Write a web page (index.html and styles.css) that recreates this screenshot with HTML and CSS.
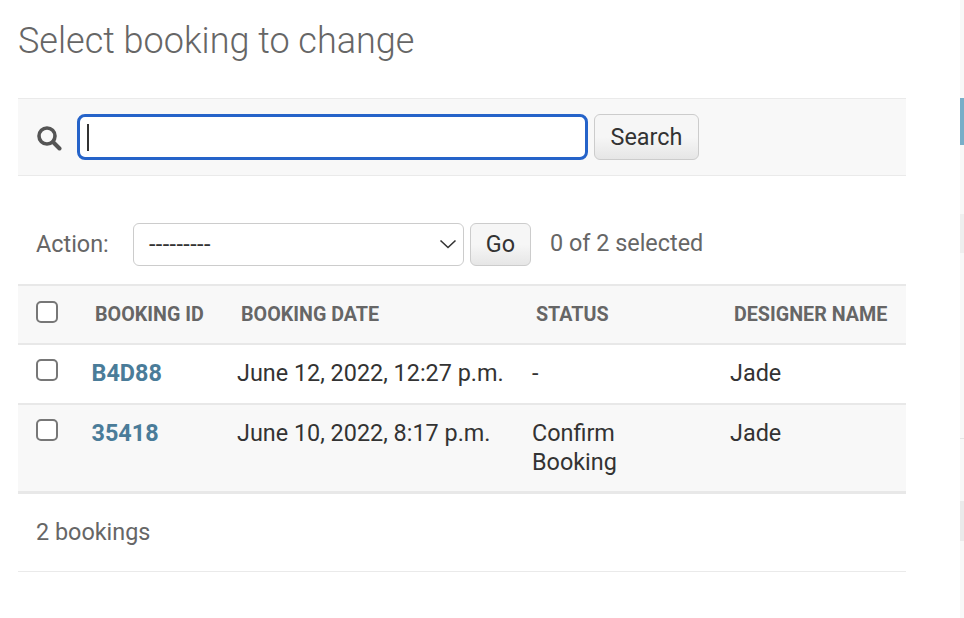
FILE: index.html
```html
<!DOCTYPE html>
<html lang="en">
<head>
<meta charset="utf-8">
<title>Select booking to change</title>
<link rel="stylesheet" href="styles.css">
</head>
<body>
<div class="page">
  <main class="content">
    <h1 class="title">Select booking to change</h1>
    <form class="search-bar">
      <svg class="search-icon" viewBox="0 0 26 26" width="26" height="26" aria-hidden="true"><circle cx="11" cy="11" r="8" fill="none" stroke="#555" stroke-width="3.6"/><path d="M17 17l6.5 6.5" stroke="#555" stroke-width="4" stroke-linecap="round"/></svg>
      <div class="search-input"><span class="caret"></span></div>
      <button type="button" class="btn btn-search">Search</button>
    </form>
    <div class="actions">
      <label class="action-label">Action:</label>
      <div class="select"><span>---------</span>
        <svg viewBox="0 0 18 10" width="18" height="10" aria-hidden="true"><path d="M1.5 1.5L9 8.5l7.5-7" fill="none" stroke="#333" stroke-width="1.6"/></svg>
      </div>
      <button type="button" class="btn btn-go">Go</button>
      <span class="counter">0 of 2 selected</span>
    </div>
    <table class="results">
      <thead>
        <tr>
          <th class="c-check"><span class="check"></span></th>
          <th class="c-id">Booking ID</th>
          <th class="c-date">Booking date</th>
          <th class="c-status">Status</th>
          <th class="c-name">Designer name</th>
        </tr>
      </thead>
      <tbody>
        <tr class="row1">
          <td class="c-check"><span class="check"></span></td>
          <td class="c-id"><a href="#">B4D88</a></td>
          <td class="c-date">June 12, 2022, 12:27 p.m.</td>
          <td class="c-status">-</td>
          <td class="c-name">Jade</td>
        </tr>
        <tr class="row2">
          <td class="c-check"><span class="check"></span></td>
          <td class="c-id"><a href="#">35418</a></td>
          <td class="c-date">June 10, 2022, 8:17 p.m.</td>
          <td class="c-status">Confirm<br>Booking</td>
          <td class="c-name">Jade</td>
        </tr>
      </tbody>
    </table>
    <p class="paginator">2 bookings</p>
  </main>
  <aside class="filter">
    <div class="f-head"></div>
    <div class="f-body"></div>
    <div class="f-sel"></div>
    <div class="f-line"></div>
    <div class="f-sel2"></div>
  </aside>
</div>
</body>
</html>
```
FILE: styles.css
```css
* { box-sizing: border-box; }
html, body { margin: 0; padding: 0; background: #fff; }
body { font-family: Roboto, "Liberation Sans", sans-serif; color: #333; overflow: hidden; }
.page { display: flex; width: 964px; height: 618px; }
.content { width: 888px; margin-left: 18px; flex: none; }
.title { margin: 0; padding-top: 20px; height: 98px; font-size: 36px; font-weight: 300; line-height: 42px; color: #666; }
.search-bar { display: flex; align-items: center; height: 78px; background: #f8f8f8; border-top: 1px solid #eaeaea; border-bottom: 1px solid #eaeaea; padding-left: 18px; }
.search-icon { flex: none; margin-right: 15px; margin-top: 2px; }
.search-input { width: 511px; height: 46px; border: 3px solid #2563c9; border-radius: 8px; background: #fff; display: flex; align-items: center; padding-left: 7px; }
.caret { width: 2px; height: 27px; background: #333; }
.btn { font: 400 23.4px/1 Roboto, sans-serif; color: #333; border: 1px solid #ccc; border-radius: 6px; background: linear-gradient(#f6f6f6, #f6f6f6 50%, #e6e6e6); padding: 2px 0 0; }
.btn-search { width: 105px; height: 46px; margin-left: 6px; }
.actions { display: flex; align-items: center; margin-top: 46px; height: 44px; padding-left: 18px; }
.action-label { font-size: 23.4px; color: #666; width: 97px; }
.select { width: 331px; height: 43px; border: 1px solid #ccc; border-radius: 6px; background: #fff; display: flex; align-items: center; justify-content: space-between; padding: 0 6px 0 15px; font-size: 23.4px; letter-spacing: .4px; color: #333; }
.btn-go { width: 61px; height: 43px; margin-left: 6px; }
.counter { margin-left: 19px; font-size: 23.4px; color: #666; margin-top: -2px; }
.results { width: 888px; margin-top: 18px; border-collapse: collapse; table-layout: fixed; }
.results th { height: 59px; background: #f8f8f8; border-top: 2px solid #e8e8e8; border-bottom: 2px solid #e8e8e8; font-size: 19.7px; font-weight: 700; text-transform: uppercase; color: #666; text-align: left; padding: 0 0 0 18px; vertical-align: middle; }
.results td { font-size: 23.4px; line-height: 29px; padding: 14px 0 14px 18px; vertical-align: top; color: #333; }
.row1 td { height: 60px; border-bottom: 2px solid #e8e8e8; }
.row2 td { height: 88px; background: #f8f8f8; border-bottom: 3px solid #e8e8e8; }
.results a { color: #4a7c99; font-weight: 700; text-decoration: none; }
.check { display: block; width: 22px; height: 22px; border: 2px solid #777; border-radius: 5px; background: #fff; }
.results td .check { margin-top: 0; }
.results th .check { margin-top: -6px; }
.c-check { width: 55px; }
.c-id { width: 145px; }
.c-date { width: 295px; }
.c-status { width: 198px; }
.results th.c-id { padding-left: 22px; }
.results td.c-id { padding-left: 18.5px; }
.results td.c-date, .results td.c-status, .results td.c-name { padding-left: 19px; }
.results th.c-date, .results th.c-status, .results th.c-name { padding-left: 23px; }
.paginator { margin: 0; height: 78px; padding: 24px 0 0 18px; font-size: 23.4px; line-height: 29px; color: #666; border-bottom: 1px solid #eaeaea; }
.filter { width: 4px; margin-left: 54px; flex: none; display: flex; flex-direction: column; background: #f8f8f8; padding-top: 98px; height: 618px; }
.f-head { height: 47px; background: #79aec8; flex: none; }
.f-body { height: 69px; flex: none; }
.f-sel { height: 39px; background: #eee; flex: none; }
.f-line { height: 186px; border-bottom: 1px solid #e4e4e4; flex: none; }
.f-sel2 { height: 40px; margin-top: 62px; background: #eaeaea; flex: none; }
```
